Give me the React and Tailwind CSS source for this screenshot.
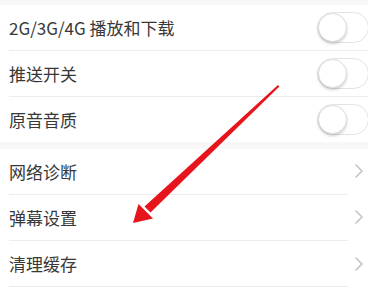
import React from "react";

const font = { fontFamily: '"Noto Sans CJK SC", "Liberation Sans", sans-serif' };

function Toggle() {
  return (
    <div className="relative w-[52px] h-[31px] rounded-full border border-[#e3e3e3] bg-white shrink-0">
      <div className="absolute left-0 top-0 w-[29px] h-[29px] rounded-full bg-white border border-[#dcdcdc] shadow-[0_2px_3px_rgba(0,0,0,0.18)]" />
    </div>
  );
}

function Chevron() {
  return (
    <svg width="8" height="14" viewBox="0 0 8 14" className="shrink-0">
      <path d="M1 1 L7 7 L1 13" fill="none" stroke="#c4c4c4" strokeWidth="1.6" strokeLinecap="round" strokeLinejoin="round" />
    </svg>
  );
}

function Row({ label, right, divider = true }) {
  return (
    <div className="pl-[9px]">
      <div className="h-[45px] flex items-center justify-between mr-[-1px]">
        <span className="text-[17px] text-[#383838] leading-none">{label}</span>
        {right}
      </div>
      {divider ? <div className="h-px bg-[#ececec]" /> : null}
    </div>
  );
}

export default function App() {
  return (
    <div className="relative w-[368px] h-[296px] bg-white overflow-hidden" style={font}>
      <div className="h-[5px] bg-[#f7f7f7]" />
      <Row label="2G/3G/4G 播放和下载" right={<Toggle />} />
      <Row label="推送开关" right={<Toggle />} />
      <Row label="原音音质" right={<Toggle />} divider={false} />
      <div className="h-[7px] bg-[#f7f7f7]" />
      <div className="pl-[9px] pr-[20px]">
        <div className="h-[45px] flex items-center justify-between">
          <span className="text-[17px] text-[#383838] leading-none">网络诊断</span>
        </div>
        <div className="h-px bg-[#ececec]" />
        <div className="h-[45px] flex items-center justify-between">
          <span className="text-[17px] text-[#383838] leading-none">弹幕设置</span>
        </div>
        <div className="h-px bg-[#ececec]" />
        <div className="h-[45px] flex items-center justify-between">
          <span className="text-[17px] text-[#383838] leading-none">清理缓存</span>
        </div>
        <div className="h-px bg-[#ececec]" />
      </div>
      <div className="absolute right-[5px] top-[164px]"><Chevron /></div>
      <div className="absolute right-[5px] top-[210px]"><Chevron /></div>
      <div className="absolute right-[5px] top-[257px]"><Chevron /></div>
      <svg className="absolute left-0 top-0" width="368" height="296" viewBox="0 0 368 296">
        <path d="M278 85 L279.4 86.6 L150.5 212.5 L144.5 206.5 Z" fill="#e8141b" />
        <path d="M133 223 L138.5 204 L153 218.5 Z" fill="#e8141b" />
      </svg>
    </div>
  );
}
